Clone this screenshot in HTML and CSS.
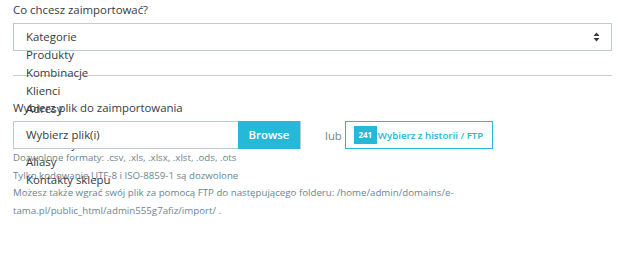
FILE: index.html
```html
<!DOCTYPE html>
<html lang="pl">
<head>
    <meta charset="UTF-8">
    <title>Import</title>
    <link rel="stylesheet" href="styles.css">
</head>
<body>
    <div class="form-group">
        <label class="form-label">Co chcesz zaimportować?</label>
        <div class="select">
            <ul class="options">
                <li>Kategorie</li>
                <li>Produkty</li>
                <li>Kombinacje</li>
                <li>Klienci</li>
                <li>Adresy</li>
                <li>Marki</li>
                <li>Dostawcy</li>
                <li>Aliasy</li>
                <li>Kontakty sklepu</li>
            </ul>
            <svg class="caret" width="7" height="10" viewBox="0 0 7 10">
                <path d="M3.5 0.5 L6.5 4 L0.5 4 Z M0.5 6 L6.5 6 L3.5 9.5 Z" fill="#363a41"/>
            </svg>
        </div>
    </div>

    <hr class="divider">

    <div class="form-group">
        <label class="form-label">Wybierz plik do zaimportowania</label>
        <div class="file-row">
            <div class="file-input">
                <span class="file-name">Wybierz plik(i)</span>
                <span class="browse">Browse</span>
            </div>
            <span class="or">lub</span>
            <span class="history"><span class="badge">241</span>Wybierz z historii / FTP</span>
        </div>
        <p class="help">
            Dozwolone formaty: .csv, .xls, .xlsx, .xlst, .ods, .ots<br>
            Tylko kodowanie UTF-8 i ISO-8859-1 są dozwolone<br>
            Możesz także wgrać swój plik za pomocą FTP do następującego folderu: /home/admin/domains/e-<br>
            tama.pl/public_html/admin555g7afiz/import/ .
        </p>
    </div>
</body>
</html>
```

FILE: styles.css
```css
body {
    margin: 0;
    padding: 1px 6px 0 13px;
    font-family: "Open Sans", sans-serif;
    font-size: 11.4px;
    color: #363a41;
    background: #fff;
}
.form-label {
    display: block;
    line-height: 18px;
    margin-bottom: 4px;
}
.select {
    position: relative;
    height: 28px;
    box-sizing: border-box;
    border: 1px solid #bbcdd2;
}
.options {
    position: absolute;
    top: 4px;
    left: 12px;
    margin: 0;
    padding: 0;
    list-style: none;
    line-height: 17.9px;
    white-space: nowrap;
    z-index: 1;
}
.caret {
    position: absolute;
    right: 11px;
    top: 8px;
}
.divider {
    border: none;
    border-top: 1px solid #c4ced1;
    margin: 24px 0 23px;
}
.file-row {
    position: relative;
    z-index: 2;
    display: flex;
    align-items: center;
    height: 28px;
}
.file-input {
    display: flex;
    height: 28px;
    width: 288px;
    box-sizing: border-box;
    border-right: 1px solid #bbcdd2;
}
.file-name {
    flex: 1;
    box-sizing: border-box;
    border: 1px solid #bbcdd2;
    border-right: none;
    background: #fff;
    padding-left: 12px;
    line-height: 26px;
}
.browse {
    width: 62px;
    background: #25b9d7;
    color: #fff;
    font-weight: 600;
    text-align: center;
    line-height: 28px;
}
.or {
    margin: 0 3px 0 24px;
    color: #6c868e;
}
.history {
    display: flex;
    align-items: center;
    height: 28px;
    box-sizing: border-box;
    border: 1px solid #25b9d7;
    padding: 0 9px 0 8px;
    color: #25b9d7;
    font-size: 9.7px;
    font-weight: 600;
    background: #fff;
}
.badge {
    background: #25b9d7;
    color: #fff;
    font-size: 8px;
    font-weight: 700;
    width: 23px;
    height: 18px;
    line-height: 18px;
    text-align: center;
    margin-right: 1px;
}
.help {
    margin: 0;
    font-size: 9.7px;
    line-height: 17.6px;
    color: #6c868e;
}
```
